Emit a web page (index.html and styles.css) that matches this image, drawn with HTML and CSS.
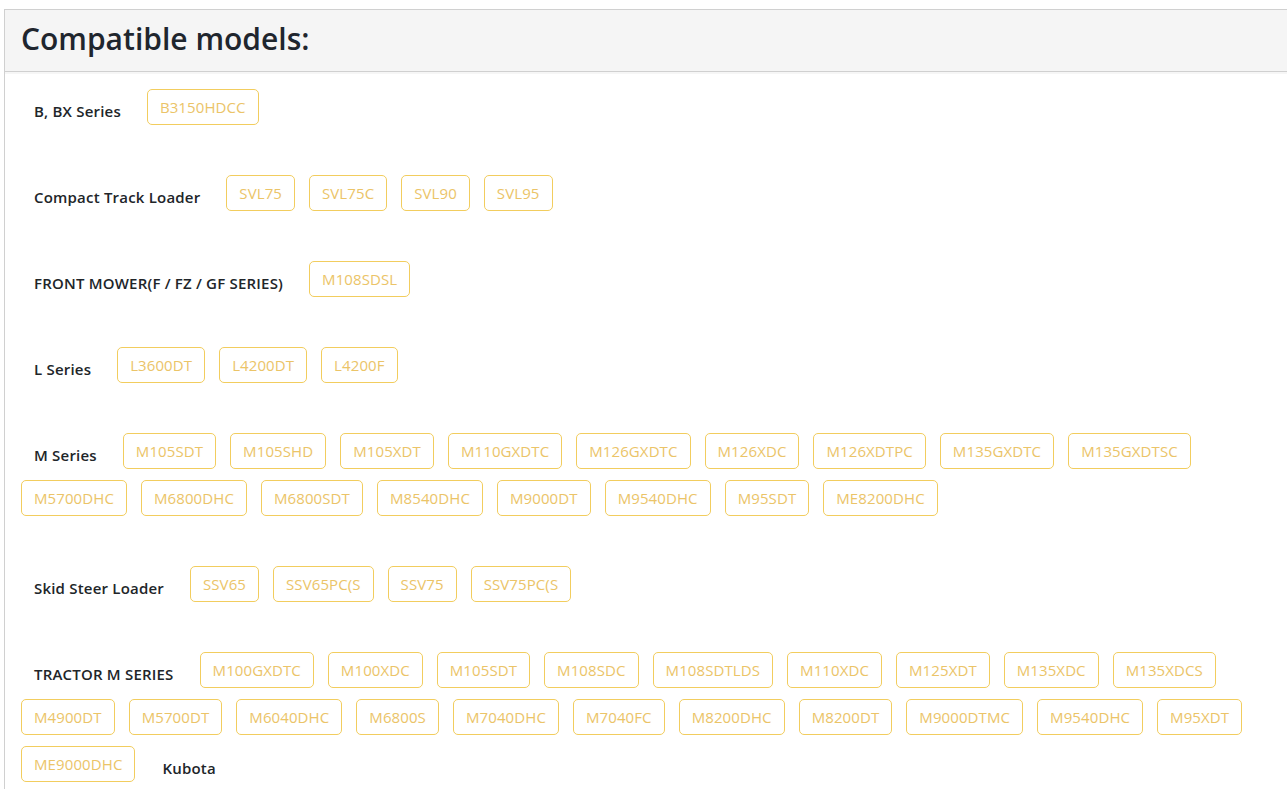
FILE: index.html
```html
<!DOCTYPE html>
<html>
<head>
<meta charset="utf-8">
<link rel="stylesheet" href="styles.css">
</head>
<body>
<div class="card">
  <div class="card-header"><h2 class="title">Compatible models:</h2></div>
  <div class="card-body">
    <div class="series">
      <span class="label">B, BX Series</span>
      <span class="model">B3150HDCC</span>
    </div>
    <div class="series">
      <span class="label">Compact Track Loader</span>
      <span class="model">SVL75</span><span class="model">SVL75C</span><span class="model">SVL90</span><span class="model">SVL95</span>
    </div>
    <div class="series">
      <span class="label">FRONT MOWER(F / FZ / GF SERIES)</span>
      <span class="model">M108SDSL</span>
    </div>
    <div class="series">
      <span class="label">L Series</span>
      <span class="model">L3600DT</span><span class="model">L4200DT</span><span class="model">L4200F</span>
    </div>
    <div class="series">
      <span class="label">M Series</span>
      <span class="model">M105SDT</span><span class="model">M105SHD</span><span class="model">M105XDT</span><span class="model">M110GXDTC</span><span class="model">M126GXDTC</span><span class="model">M126XDC</span><span class="model">M126XDTPC</span><span class="model">M135GXDTC</span><span class="model">M135GXDTSC</span><span class="model">M5700DHC</span><span class="model">M6800DHC</span><span class="model">M6800SDT</span><span class="model">M8540DHC</span><span class="model">M9000DT</span><span class="model">M9540DHC</span><span class="model">M95SDT</span><span class="model">ME8200DHC</span>
    </div>
    <div class="series">
      <span class="label">Skid Steer Loader</span>
      <span class="model">SSV65</span><span class="model">SSV65PC(S</span><span class="model">SSV75</span><span class="model">SSV75PC(S</span>
    </div>
    <div class="series">
      <span class="label">TRACTOR M SERIES</span>
      <span class="model">M100GXDTC</span><span class="model">M100XDC</span><span class="model">M105SDT</span><span class="model">M108SDC</span><span class="model">M108SDTLDS</span><span class="model">M110XDC</span><span class="model">M125XDT</span><span class="model">M135XDC</span><span class="model">M135XDCS</span><span class="model">M4900DT</span><span class="model">M5700DT</span><span class="model">M6040DHC</span><span class="model">M6800S</span><span class="model">M7040DHC</span><span class="model">M7040FC</span><span class="model">M8200DHC</span><span class="model">M8200DT</span><span class="model">M9000DTMC</span><span class="model">M9540DHC</span><span class="model">M95XDT</span><span class="model">ME9000DHC</span>
      <span class="label">Kubota</span>
    </div>
  </div>
</div>
</body>
</html>
```

FILE: styles.css
```css
html, body {
  margin: 0;
  padding: 0;
  background: #fff;
  overflow: hidden;
}
body {
  font-family: "Open Sans", "Noto Sans", sans-serif;
  color: #212529;
}
.card {
  margin: 9px 0 0 4px;
  border: 1px solid #d0d0d0;
  border-right: none;
  border-bottom: none;
  background: #fff;
}
.card-header {
  background: #f5f5f5;
  border-bottom: 1px solid #d0d0d0;
  height: 62px;
  box-sizing: border-box;
  display: flex;
  align-items: center;
  padding: 0 16px 5px 16px;
  box-shadow: 0 2px 0 #f6f6f6;
}
.title {
  margin: 0;
  font-size: 30px;
  font-weight: 600;
  color: #1f262e;
  letter-spacing: 0;
}
.card-body {
  padding: 17px 16px 0 16px;
}
.series {
  display: flex;
  flex-wrap: wrap;
  align-items: center;
  margin-bottom: 39px;
}
.label {
  padding: 8px 13px 0 13px;
  margin-right: 13px;
  font-size: 15px;
  font-weight: 600;
  color: #212529;
  letter-spacing: 0.2px;
  margin-bottom: 11px;
}
.model {
  box-sizing: border-box;
  height: 36px;
  display: inline-flex;
  align-items: center;
  padding: 0 12px;
  margin: 0 14px 11px 0;
  border: 1px solid #f2cd5e;
  border-radius: 5px;
  font-size: 15px;
  font-weight: 400;
  color: #ebc468;
  letter-spacing: 0.1px;
}
```
